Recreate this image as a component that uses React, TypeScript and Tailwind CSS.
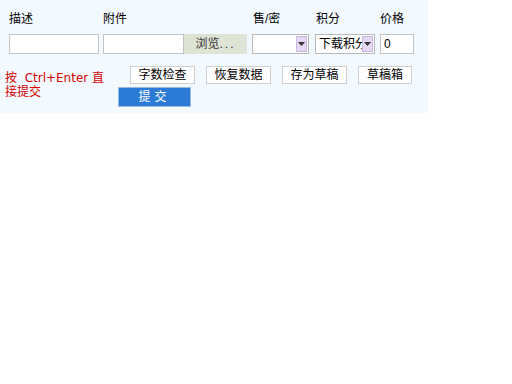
import React from 'react';

const font = { fontFamily: '"Liberation Sans", "Noto Sans CJK SC", sans-serif' };

const Field = ({ label, children, width }: any) => (
  <div className={`flex flex-col ${width}`}>
    <span className="h-[14px] text-[12px] leading-[14px] text-black">{label}</span>
    <div className="mt-[8px] flex h-[20px]">{children}</div>
  </div>
);

const FakeSelect = ({ value = '', width }: any) => (
  <div className={`flex h-[20px] ${width} items-center border border-[#b9b9b9] bg-white pl-[3px]`}>
    <span className="flex-1 overflow-hidden whitespace-nowrap text-[12px] leading-[14px] text-black">{value}</span>
    <span className="mr-[1px] flex h-[16px] w-[11px] items-center justify-center border border-[#c7b8de] bg-[#e4d8f2]">
      <svg width="7" height="4" viewBox="0 0 7 4"><path d="M0 0h7L3.5 4z" fill="#333" /></svg>
    </span>
  </div>
);

const SmallBtn = ({ children, width }: any) => (
  <button className={`flex h-[18px] ${width} items-center justify-center border border-[#cfcfcf] bg-white text-[12px] leading-[14px] text-black`}>
    {children}
  </button>
);

export default function App() {
  return (
    <div className="h-[384px] w-[512px] bg-white" style={font}>
      <div className="flex h-[113px] w-[428px] flex-col bg-[#f3faff]">
        <div className="flex pl-[9px] pt-[12px]">
          <Field label="描述" width="w-[90px]">
            <div className="h-[20px] w-[90px] border border-[#c4c4c4] bg-white" />
          </Field>
          <div className="ml-[4px]">
            <Field label="附件" width="w-[144px]">
              <div className="h-[20px] w-[81px] border border-[#c4c4c4] bg-white" />
              <div className="flex h-[20px] w-[63px] items-center justify-center bg-[#dde3d5] text-[12px] text-[#333]">
                浏览<span className="tracking-[2px]">...</span>
              </div>
            </Field>
          </div>
          <div className="ml-[5px]">
            <Field label={<span className="pl-[1px]">售/密</span>} width="w-[57px]">
              <FakeSelect width="w-[57px]" />
            </Field>
          </div>
          <div className="ml-[6px]">
            <Field label={<span className="pl-[1px]">积分</span>} width="w-[60px]">
              <FakeSelect value="下载积分" width="w-[60px]" />
            </Field>
          </div>
          <div className="ml-[5px]">
            <Field label="价格" width="w-[34px]">
              <div className="flex h-[20px] w-[34px] items-center border border-[#c4c4c4] bg-white pl-[3px] text-[12px] text-black">0</div>
            </Field>
          </div>
        </div>
        <div className="mt-[12px] flex">
          <div
            className="w-[108px] pl-[5px] pt-[5px] text-[12px] leading-[14px] text-[#d40000]"
            style={{ fontFamily: '"DejaVu Sans", "Noto Sans CJK SC", sans-serif' }}
          >
            按&nbsp; Ctrl+Enter 直接提交
          </div>
          <div className="ml-[10px] flex flex-col">
            <div className="flex gap-[11px] pl-[12px]">
              <SmallBtn width="w-[65px]">字数检查</SmallBtn>
              <SmallBtn width="w-[65px]">恢复数据</SmallBtn>
              <SmallBtn width="w-[65px]">存为草稿</SmallBtn>
              <SmallBtn width="w-[54px]">草稿箱</SmallBtn>
            </div>
            <button className="mt-[3px] flex h-[20px] w-[73px] items-center justify-center border border-[#9bbce6] bg-[#2b7bd6] text-[12px] tracking-[4px] text-white">
              提交
            </button>
          </div>
        </div>
      </div>
    </div>
  );
}
